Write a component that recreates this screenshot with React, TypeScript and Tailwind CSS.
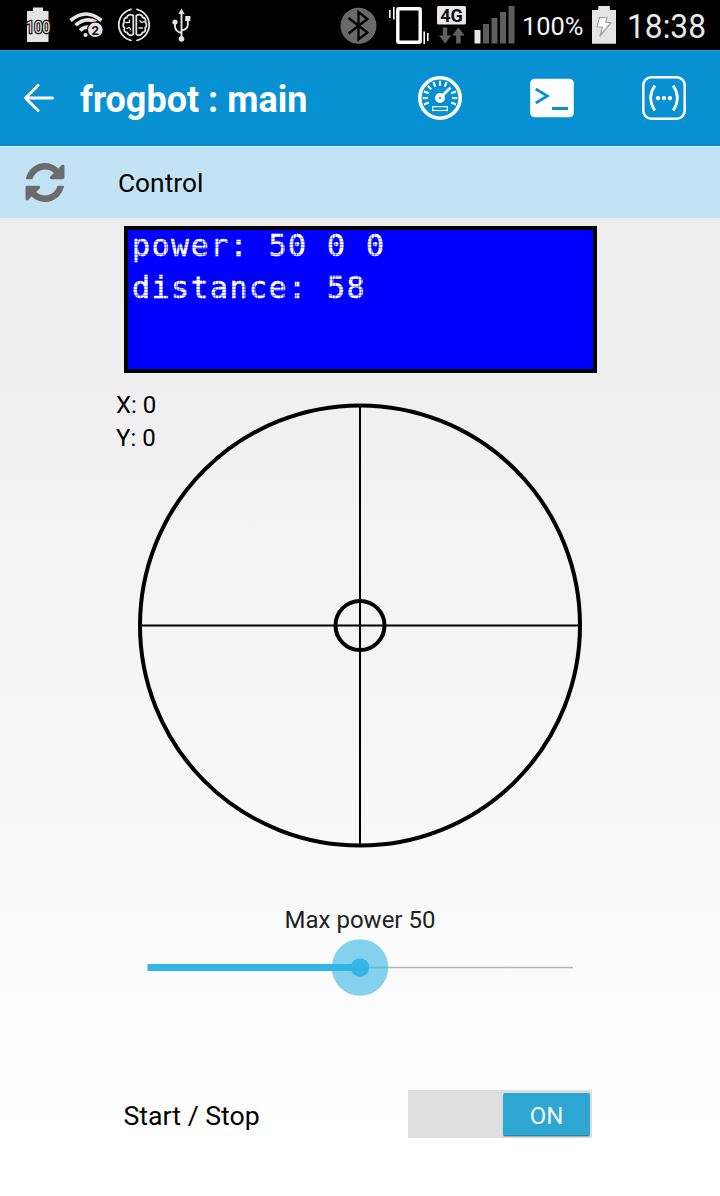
import React from "react";

function StatusBar() {
  return (
    <header className="flex h-[50px] w-full bg-black">
      <svg width="720" height="50" viewBox="0 0 720 50" className="block" fill="none">
        <path d="M33 7.500h10v3.500h5.500v31H27V11h6z" fill="#e4e4e4" />
        <text x="26" y="33" fontFamily="Roboto, sans-serif" fontSize="16" textLength="24.500" lengthAdjust="spacingAndGlyphs" fill="#e4e4e4" stroke="#111" strokeWidth="2.600" paintOrder="stroke">100</text>
        <g stroke="#e4e4e4" strokeWidth="3.600">
          <path d="M70.500 20.500Q86 7.500 101.500 20.500" />
          <path d="M75.500 25.300Q85 16.500 96 21.800" />
          <path d="M80 30.500Q84 26.500 89 27" />
        </g>
        <circle cx="85.500" cy="35" r="2.100" fill="#e4e4e4" />
        <circle cx="95.300" cy="29.800" r="8.300" fill="#000" />
        <circle cx="95.300" cy="29.800" r="7.300" fill="#e4e4e4" />
        <text x="95.300" y="34.500" textAnchor="middle" fontFamily="Roboto, sans-serif" fontSize="13" fontWeight="700" fill="#111">2</text>
        <g stroke="#e4e4e4" strokeWidth="1.800" strokeLinecap="round" strokeLinejoin="round">
          <path d="M131 9.300A16 16 0 0 0 131 40.400M137 9.300A16 16 0 0 1 137 40.400" />
          <path d="M133.300 15.500c-3-2-6-.5-6.400 2-2.500.2-3.600 2.500-2.400 4.500-1.800 1.500-1.800 4.500 0 6-1 2.500.5 4.500 2.700 4.500.7 3 4.500 3.600 6.100 1.500zM136.300 15.500c3-2 6-.5 6.400 2 2.500.2 3.600 2.500 2.400 4.500 1.800 1.500 1.800 4.500 0 6 1 2.500-.5 4.500-2.700 4.500-.7 3-4.500 3.600-6.100 1.500z" />
          <path d="M126 22.500h3.500v-2.500M127 28.500q3-2 3.500 1M144 21.500q-3 2-4-1M139 28h3.500" strokeWidth="1.300" />
        </g>
        <g fill="#e4e4e4">
          <path d="M181.500 8.500l3.200 5.500h-6.400z" />
          <path d="M181.500 13v26M175 22v4q0 5.500 6.500 7M187.800 18v6.500q0 5-6.300 6" fill="none" stroke="#e4e4e4" strokeWidth="1.900" />
          <circle cx="175" cy="22" r="2.600" />
          <path d="M185.200 16h5.200v5h-5.200z" />
          <circle cx="181.500" cy="39" r="2.800" />
        </g>
        <circle cx="358.500" cy="25.800" r="18" fill="#696969" />
        <path d="M348.500 18l19 14.500-9 7V12l9 7-19 14.500" stroke="#000" strokeWidth="2.300" />
        <rect x="397.800" y="8.700" width="22.400" height="33.600" rx="1" stroke="#fff" strokeWidth="3.400" />
        <path d="M389.800 10v8M393.800 7v12.500M424.200 31.500V44M427.800 33v8" stroke="#fff" strokeWidth="1.600" />
        <rect x="437" y="6" width="29" height="18.500" rx="1.500" fill="#e8e8e8" />
        <text x="451.500" y="21.800" textAnchor="middle" fontFamily="Roboto, sans-serif" fontSize="18" fontWeight="700" fill="#111">4G</text>
        <path d="M442.800 27.500h4.500v8h4l-6.200 8-6.200-8h3.900zM456.200 43.500v-8h-4l6.200-8 6.200 8h-4v8z" fill="#606060" />
        <path d="M474.500 30h6v13.500h-6z" fill="#e8e8e8" />
        <path d="M483 24h6v19.500h-6zM491.500 18h6v25.500h-6zM500 12h6v31.500h-6zM508.500 6h6v37.500h-6z" fill="#5d5d5d" />
        <text x="522" y="35" fontFamily="Roboto, sans-serif" fontSize="26.500" textLength="61.500" lengthAdjust="spacingAndGlyphs" fill="#f4f4f4">100%</text>
        <path d="M598.300 6h11.500v4h6.200v33.700h-24V10h6.300z" fill="#e4e4e4" />
        <path d="M599.500 17.500h7.500l-1.500 5h5.500L600 36l2.500-9h-5.500z" fill="#fff" stroke="#a0a0a0" strokeWidth="1.200" strokeLinejoin="round" />
        <text x="627" y="37.500" fontFamily="Roboto, sans-serif" fontSize="32.500" textLength="79" lengthAdjust="spacingAndGlyphs" fill="#e8e8e8">18:38</text>
      </svg>
    </header>
  );
}

function GaugeIcon() {
  const ticks = [-112, -90, -67.5, -45, -22.5, 0, 22.5, 67.5, 90, 112];
  return (
    <svg width="46" height="46" viewBox="-23 -23 46 46" fill="none" stroke="#fff">
      <circle r="20.200" strokeWidth="3.600" />
      {ticks.map((a) => (
        <path key={a} d="M0-17.200V-12.200" strokeWidth="2.100" transform={`rotate(${a})`} />
      ))}
      <path d="M2 -2L10.500-10.500" strokeWidth="2.600" />
      <circle r="3" strokeWidth="3.800" />
      <rect x="-7.300" y="8.700" width="14.600" height="3.800" strokeWidth="1.200" />
    </svg>
  );
}

function TerminalIcon() {
  return (
    <svg width="44" height="40" viewBox="0 0 44 40" fill="none" className="mr-[2px]">
      <rect x=".2" y=".8" width="43.600" height="38.400" rx="4.500" fill="#fff" />
      <path d="M5.800 11l11.500 7-11.500 7M22 30.500h16" stroke="#0790d2" strokeWidth="2.800" />
    </svg>
  );
}

function BracketsIcon() {
  return (
    <svg width="44" height="44" viewBox="0 0 44 44" fill="none" stroke="#fff">
      <rect x="1.300" y="1.300" width="41.400" height="41.400" rx="8" strokeWidth="2.500" />
      <path d="M12.800 9.500Q4.500 22 12.800 34.500M31.200 9.500Q39.500 22 31.200 34.500" strokeWidth="2.700" />
      <g fill="#fff" stroke="none">
        <circle cx="16" cy="22.200" r="2.100" />
        <circle cx="22" cy="22.200" r="2.100" />
        <circle cx="28" cy="22.200" r="2.100" />
      </g>
    </svg>
  );
}

function AppBar() {
  return (
    <nav className="flex h-24 items-center border-t border-[#0a9ae6] bg-[#0790d2] pb-px pl-[23px]">
      <svg width="32" height="32" viewBox="0 0 32 32" fill="none" stroke="#fff" strokeWidth="3" strokeLinecap="round" strokeLinejoin="round">
        <path d="M15 3.500L2.500 16 15 28.500M3 16h26.500" />
      </svg>
      <h1 className="ml-[25px] w-[337px] pt-[3px] text-[36px] leading-none font-bold whitespace-nowrap text-white">frogbot : main</h1>
      <div className="flex w-[269px] items-center justify-between pb-px">
        <GaugeIcon />
        <TerminalIcon />
        <BracketsIcon />
      </div>
    </nav>
  );
}

function SectionBar() {
  return (
    <div className="flex h-[72px] items-center border-t border-[#dcf0fa] bg-[#c2e3f4] pl-[25px]">
      <svg width="40" height="39" viewBox="0 0 1536 1536" fill="#6b6b6b" className="mb-px">
        <path d="M1511 928q0 5-1 7-64 268-268 434.500T764 1536q-146 0-282.500-55T238 1324l-129 129q-19 19-45 19t-45-19-19-45V960q0-26 19-45t45-19h448q26 0 45 19t19 45-19 45l-137 137q71 66 161 102t187 36q134 0 250-65t186-179q11-17 53-117 8-23 30-23h192q13 0 22.500 9.500t9.500 22.500zm25-800v448q0 26-19 45t-45 19h-448q-26 0-45-19t-19-45 19-45l138-138Q969 256 768 256q-134 0-250 65T332 500q-11 17-53 117-8 23-30 23H50q-13 0-22.500-9.500T18 608v-7q65-268 270-434.500T768 0q146 0 284 55.500T1297 212l130-129q19-19 45-19t45 19 19 45z" />
      </svg>
      <span className="ml-[53px] pt-[2px] text-[26.300px] leading-none text-black">Control</span>
    </div>
  );
}

function Lcd() {
  return (
    <div className="relative mx-auto mt-2 h-[147px] w-[473px] border-4 border-black bg-[#0000ff]">
      <pre className="pl-[4.500px] font-['DejaVu_Sans_Mono',monospace] text-[30px] leading-[42px] tracking-[1.440px] text-white [-webkit-text-stroke:0.500px_white]">
        <div className="-mt-[5px]">power: 50 0 0</div>
        <div>distance: 58</div>
      </pre>
      <div className="absolute inset-0 bg-[repeating-linear-gradient(90deg,transparent_0,transparent_2.650px,#0000ff60_2.650px,#0000ff60_3.250px),repeating-linear-gradient(0deg,transparent_0,transparent_2.500px,#0000ff60_2.500px,#0000ff60_3.200px)]" />
    </div>
  );
}

function Joystick() {
  return (
    <section className="relative mt-7 h-[448px]">
      <svg width="448" height="448" viewBox="0 0 448 448" className="mx-auto block" fill="none" stroke="#000">
        <circle cx="224" cy="224.500" r="220" strokeWidth="4" />
        <path d="M224 4.500v440M4 224.500h440" strokeWidth="2" />
        <circle cx="224" cy="224.500" r="24.500" strokeWidth="4" />
      </svg>
      <div className="absolute -top-3 left-[116px] text-[24px] leading-[33px] text-black">
        <div>X: 0</div>
        <div>Y: 0</div>
      </div>
    </section>
  );
}

function PowerSlider() {
  return (
    <section className="mt-[57px] flex flex-col items-center">
      <label className="text-[24px] leading-7 text-[#222]">Max power 50</label>
      <svg width="426" height="60" viewBox="0 0 426 60" className="mt-[3px] block">
        <path d="M213 30.500h213" stroke="#b5b5b5" strokeWidth="1.300" />
        <path d="M.5 27h213v7H.5z" fill="#33b5e5" />
        <circle cx="213" cy="30.500" r="28.300" fill="#33b5e5" fillOpacity=".6" />
        <circle cx="213" cy="30.500" r="9.300" fill="#33b5e5" />
      </svg>
    </section>
  );
}

function StartStop() {
  return (
    <section className="mt-[93px] flex h-12 items-center justify-between pr-32 pl-[123.500px]">
      <span className="pt-[5px] text-[26.700px] leading-none text-black">Start / Stop</span>
      <button className="flex h-12 w-[184px] justify-end bg-[#dedede] pt-[3px] pr-[2px]">
        <span className="flex h-[43px] w-[87px] items-center justify-center rounded-[2px] border-b border-[#2489ad] bg-[#2ea6d2] pt-[3px] text-[24px] leading-none text-[#f2f2f2] shadow-[0_1px_1px_#aaa]">ON</span>
      </button>
    </section>
  );
}

export default function App() {
  return (
    <div className="flex h-[1196px] w-[720px] flex-col overflow-hidden font-['Roboto',sans-serif]">
      <StatusBar />
      <AppBar />
      <SectionBar />
      <main className="flex flex-1 flex-col bg-linear-to-b from-[#ececec] to-white to-95%">
        <Lcd />
        <Joystick />
        <PowerSlider />
        <StartStop />
      </main>
    </div>
  );
}
